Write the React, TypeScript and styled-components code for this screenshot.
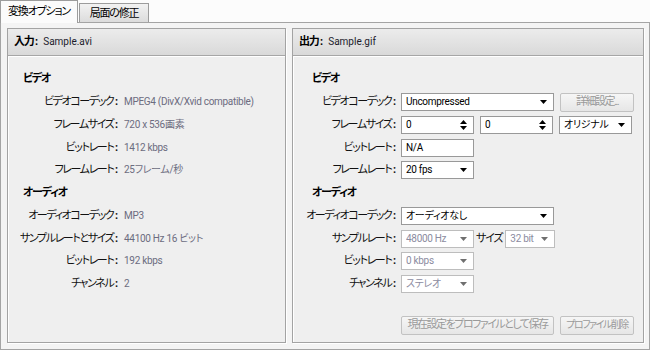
import React from "react";
import styled, { createGlobalStyle, css } from "styled-components";

const GlobalStyle = createGlobalStyle`
  html, body { margin: 0; padding: 0; background: #fcfcfc; }
  body {
    font-family: Roboto, "Noto Sans CJK JP", sans-serif;
    font-size: 11px;
    font-feature-settings: "palt";
    color: #111;
  }
`;

const jp = css`
  font-family: Roboto, "Noto Sans CJK JP", sans-serif;
  font-size: 11px;
  letter-spacing: -1.2px;
  white-space: nowrap;
  line-height: 14px;
`;

const Window = styled.div`
  width: 650px;
  height: 350px;
  display: flex;
  flex-direction: column;
  background: #fcfcfc;
`;

const TabBar = styled.div`
  height: 22px;
  display: flex;
  align-items: flex-end;
  position: relative;
  z-index: 1;
`;

const Tab = styled.div<{ $active?: boolean; $w: number }>`
  ${jp};
  box-sizing: border-box;
  width: ${(p) => p.$w}px;
  display: flex;
  align-items: center;
  justify-content: center;
  border: 1px solid #9c9c9c;
  border-bottom: none;
  color: #000;
  ${(p) =>
    p.$active
      ? css`
          height: 23px;
          margin-bottom: -1px;
          background: #fbfbfb;
        `
      : css`
          height: 19px;
          margin-left: 1px;
          background: linear-gradient(#f2f2f2, #dcdcdc);
          padding-top: 1px;
        `}
`;

const TabContent = styled.div`
  flex: 1;
  box-sizing: border-box;
  border: 1px solid #a4a4a4;
  background: #f4f4f4;
  padding: 5px 5px 6px 6px;
  display: flex;
  gap: 6px;
`;

const Panel = styled.div<{ $w: number }>`
  box-sizing: border-box;
  width: ${(p) => p.$w}px;
  border: 1px solid #a3a3a3;
  box-shadow: 1px 1px 0 #ffffff, inset 1px 1px 0 #ffffff;
  background: #efefef;
  display: flex;
  flex-direction: column;
`;

const PanelHeader = styled.div`
  height: 26px;
  border-bottom: 1px solid #a6a6a6;
  box-shadow: 0 1px 0 #ffffff;
  background: linear-gradient(#ececec, #d9d9d9);
  display: flex;
  align-items: center;
  padding-left: 6px;
  gap: 5px;
`;

const HeaderLabel = styled.span`
  ${jp};
  font-weight: bold;
  color: #000;
`;

const HeaderFile = styled.span`
  font-size: 10px;
  color: #1c1c2c;
  line-height: 14px;
`;

const Colon = styled.span`
  font-weight: bold;
  margin-left: 1.5px;
  letter-spacing: 0;
`;

const FormGrid = styled.div<{ $label: number; $pad: number; $gap: number }>`
  display: grid;
  grid-template-columns: ${(p) => p.$label}px 1fr;
  grid-auto-rows: 22.75px;
  column-gap: ${(p) => p.$gap}px;
  align-items: center;
  padding: 12px 0 0 ${(p) => p.$pad}px;
`;

const Heading = styled.div`
  ${jp};
  grid-column: 1 / span 2;
  font-weight: bold;
  color: #000;
  padding-left: 1px;
`;

const Label = styled.div`
  ${jp};
  letter-spacing: -1.4px;
  justify-self: end;
  text-align: right;
  color: #111;
`;

const Value = styled.div`
  color: #6c6c80;
  font-size: 10px;
  letter-spacing: -0.3px;
  white-space: nowrap;
  line-height: 14px;
`;

const Controls = styled.div`
  display: flex;
  align-items: center;
  gap: 6px;
`;

const Box = styled.div<{ $w: number; $disabled?: boolean }>`
  box-sizing: border-box;
  width: ${(p) => p.$w}px;
  height: 18px;
  background: #fff;
  border: 1px solid ${(p) => (p.$disabled ? "#bdbdbd" : "#999999")};
  display: flex;
  align-items: center;
  padding: 0 4px 0 4px;
  font-size: 10px;
  letter-spacing: -0.3px;
  line-height: 14px;
  color: ${(p) => (p.$disabled ? "#8c8ca0" : "#000")};
  white-space: nowrap;
`;

const BoxText = styled.span`
  flex: 1;
  overflow: hidden;
`;

const Arrow = ({ up, color = "#000" }: { up?: boolean; color?: string }) => (
  <svg width="7" height="4" viewBox="0 0 7 4" style={{ display: "block" }}>
    <path d={up ? "M0 4 L7 4 L3.5 0 Z" : "M0 0 L7 0 L3.5 4 Z"} fill={color} />
  </svg>
);

const ArrowSlot = styled.span`
  display: flex;
  flex-direction: column;
  gap: 2px;
  margin-right: 2px;
`;

const Select = ({ w, text, disabled }: { w: number; text: string; disabled?: boolean }) => (
  <Box $w={w} $disabled={disabled}>
    <BoxText>{text}</BoxText>
    <ArrowSlot>
      <Arrow color={disabled ? "#6f6f6f" : "#000"} />
    </ArrowSlot>
  </Box>
);

const SpinBox = ({ w, text }: { w: number; text: string }) => (
  <Box $w={w}>
    <BoxText>{text}</BoxText>
    <ArrowSlot>
      <Arrow up />
      <Arrow />
    </ArrowSlot>
  </Box>
);

const Button = styled.div<{ $w: number; $size?: number }>`
  ${jp};
  font-size: ${(p) => p.$size ?? 11}px;
  letter-spacing: -1.5px;
  box-sizing: border-box;
  width: ${(p) => p.$w}px;
  height: 19px;
  border: 1px solid #c2c2c2;
  border-radius: 2px;
  background: linear-gradient(#f6f6f6, #e6e6e6);
  color: #9a9a9a;
  display: flex;
  align-items: center;
  justify-content: center;
`;

const SizeLabel = styled.span`
  ${jp};
  margin: 0 -3px 0 -4px;
`;

const ButtonRow = styled.div`
  display: flex;
  gap: 6px;
  margin: 20px 0 0 108px;
`;

const FieldLabel = ({ children }: { children: string }) => (
  <Label>
    {children}
    <Colon>:</Colon>
  </Label>
);

type Row = { h: string } | { l: string; v: string };

const leftRows: Row[] = [
  { h: "ビデオ" },
  { l: "ビデオコーデック", v: "MPEG4 (DivX/Xvid compatible)" },
  { l: "フレームサイズ", v: "720 x 536画素" },
  { l: "ビットレート", v: "1412 kbps" },
  { l: "フレームレート", v: "25フレーム/秒" },
  { h: "オーディオ" },
  { l: "オーディオコーデック", v: "MP3" },
  { l: "サンプルレートとサイズ", v: "44100 Hz 16 ビット" },
  { l: "ビットレート", v: "192 kbps" },
  { l: "チャンネル", v: "2" },
];

export default function App() {
  return (
    <>
      <GlobalStyle />
      <Window>
        <TabBar>
          <Tab $active $w={78}>変換オプション</Tab>
          <Tab $w={70}>局面の修正</Tab>
        </TabBar>
        <TabContent>
          <Panel $w={279}>
            <PanelHeader>
              <HeaderLabel>
                入力<Colon>:</Colon>
              </HeaderLabel>
              <HeaderFile>Sample.avi</HeaderFile>
            </PanelHeader>
            <FormGrid $label={96} $pad={14} $gap={6}>
              {leftRows.map((r, i) =>
                "h" in r ? (
                  <Heading key={i}>{r.h}</Heading>
                ) : (
                  <React.Fragment key={i}>
                    <FieldLabel>{r.l}</FieldLabel>
                    <Value>{r.v}</Value>
                  </React.Fragment>
                )
              )}
            </FormGrid>
          </Panel>
          <Panel $w={352}>
            <PanelHeader>
              <HeaderLabel>
                出力<Colon>:</Colon>
              </HeaderLabel>
              <HeaderFile>Sample.gif</HeaderFile>
            </PanelHeader>
            <FormGrid $label={85} $pad={18} $gap={5}>
              <Heading>ビデオ</Heading>
              <FieldLabel>ビデオコーデック</FieldLabel>
              <Controls>
                <Select w={153} text="Uncompressed" />
                <Button $w={74}>詳細設定...</Button>
              </Controls>
              <FieldLabel>フレームサイズ</FieldLabel>
              <Controls>
                <SpinBox w={73} text="0" />
                <SpinBox w={73} text="0" />
                <Select w={73} text="オリジナル" />
              </Controls>
              <FieldLabel>ビットレート</FieldLabel>
              <Controls>
                <Box $w={73}>N/A</Box>
              </Controls>
              <FieldLabel>フレームレート</FieldLabel>
              <Controls>
                <Select w={73} text="20 fps" />
              </Controls>
              <Heading>オーディオ</Heading>
              <FieldLabel>オーディオコーデック</FieldLabel>
              <Controls>
                <Select w={153} text="オーディオなし" />
              </Controls>
              <FieldLabel>サンプルレート</FieldLabel>
              <Controls>
                <Select w={73} text="48000 Hz" disabled />
                <SizeLabel>サイズ</SizeLabel>
                <Select w={50} text="32 bit" disabled />
              </Controls>
              <FieldLabel>ビットレート</FieldLabel>
              <Controls>
                <Select w={73} text="0 kbps" disabled />
              </Controls>
              <FieldLabel>チャンネル</FieldLabel>
              <Controls>
                <Select w={73} text="ステレオ" disabled />
              </Controls>
            </FormGrid>
            <ButtonRow>
              <Button $w={153}>現在設定をプロファイルとして保存</Button>
              <Button $w={74} $size={10}>プロファイル削除</Button>
            </ButtonRow>
          </Panel>
        </TabContent>
      </Window>
    </>
  );
}
